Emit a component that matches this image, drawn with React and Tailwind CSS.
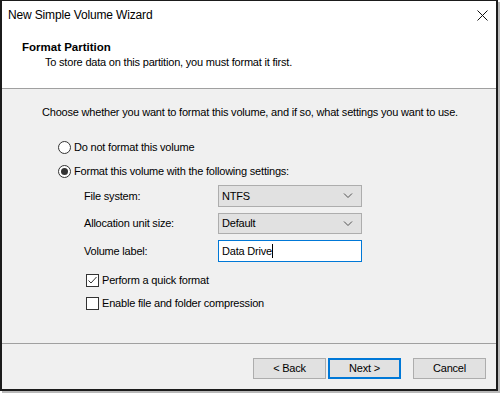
import React from 'react';

function Chevron() {
  return (
    <svg width="10" height="6" viewBox="0 0 10 6" className="shrink-0">
      <path d="M1 0.5 L5 4.5 L9 0.5" fill="none" stroke="#505050" strokeWidth="1" />
    </svg>
  );
}

function Select({ value, h }) {
  return (
    <div className={`w-[144px] ${h} flex items-center justify-between pl-[3px] pr-[8px] bg-[#e1e1e1] border border-[#adadad]`}>
      <span>{value}</span>
      <Chevron />
    </div>
  );
}

function Radio({ checked, label }) {
  return (
    <div className="flex items-center h-[15px]">
      <span className="w-[13px] h-[13px] rounded-full border border-[#333] bg-white flex items-center justify-center">
        {checked && <span className="w-[7px] h-[7px] rounded-full bg-[#333]" />}
      </span>
      <span className="ml-[3px]">{label}</span>
    </div>
  );
}

function Check({ checked, label }) {
  return (
    <div className="flex items-center h-[15px]">
      <span className="w-[13px] h-[13px] border border-[#333] bg-white flex items-center justify-center">
        {checked && (
          <svg width="11" height="11" viewBox="0 0 11 11">
            <path d="M1.5 5.5 L4 8 L9.5 2" fill="none" stroke="#333" strokeWidth="1" />
          </svg>
        )}
      </span>
      <span className="ml-[3px]">{label}</span>
    </div>
  );
}

function Button({ children, primary }) {
  return (
    <div
      className={`w-[73px] h-[21px] flex items-center justify-center bg-[#e1e1e1] ${
        primary ? 'border-2 border-[#0078d7]' : 'border border-[#adadad]'
      }`}
    >
      {children}
    </div>
  );
}

export default function App() {
  return (
    <div className="w-[502px] h-[396px] bg-white text-[11px] leading-[15px] tracking-[-0.2px] text-black font-['Liberation_Sans',Arial,sans-serif]">
      <div className="w-[498px] h-[391px] flex flex-col bg-white border-2 border-t border-[#1b1b1b] shadow-[2px_2px_0_0_#b9b9b9]">
        {/* title bar */}
        <div className="h-[29px] flex items-center justify-between pl-[6px] pr-[8px] bg-white text-[12px] tracking-[-0.15px]">
          <span>New Simple Volume Wizard</span>
          <svg width="11" height="11" viewBox="0 0 11 11">
            <path d="M0.5 0.5 L10.5 10.5 M10.5 0.5 L0.5 10.5" stroke="#111" strokeWidth="1" />
          </svg>
        </div>

        {/* header */}
        <div className="h-[59px] bg-white border-b border-[#a0a0a0] pt-[10px]">
          <div className="pl-[20px] font-bold text-[11.5px] tracking-normal">Format Partition</div>
          <div className="pl-[43px]">To store data on this partition, you must format it first.</div>
        </div>

        {/* body */}
        <div className="flex-1 bg-[#f0f0f0] pt-[16px] pl-[40px]">
          <div className="whitespace-nowrap">Choose whether you want to format this volume, and if so, what settings you want to use.</div>

          <div className="mt-[20px] pl-[16px] flex flex-col gap-[9px]">
            <Radio label="Do not format this volume" />
            <Radio checked label="Format this volume with the following settings:" />
          </div>

          <div className="mt-[6px] pl-[42px] grid grid-cols-[134px_144px] gap-y-[6px] items-center">
            <span>File system:</span>
            <Select value="NTFS" h="h-[22px]" />
            <span>Allocation unit size:</span>
            <Select value="Default" h="h-[21px]" />
            <span>Volume label:</span>
            <div className="w-[144px] h-[22px] flex items-center pl-[3px] bg-white border border-[#0078d7]">
              <span>Data Drive</span>
              <span className="w-px h-[14px] bg-black" />
            </div>
          </div>

          <div className="mt-[11px] pl-[44px] flex flex-col gap-[8px]">
            <Check checked label="Perform a quick format" />
            <Check label="Enable file and folder compression" />
          </div>
        </div>

        {/* footer */}
        <div className="h-[46px] bg-[#f0f0f0] border-t border-[#a0a0a0] flex items-start justify-end pt-[14px] pr-[10px]">
          <Button>&lt; Back</Button>
          <div className="ml-[2px]">
            <Button primary>Next &gt;</Button>
          </div>
          <div className="ml-[12px]">
            <Button>Cancel</Button>
          </div>
        </div>
      </div>
    </div>
  );
}
